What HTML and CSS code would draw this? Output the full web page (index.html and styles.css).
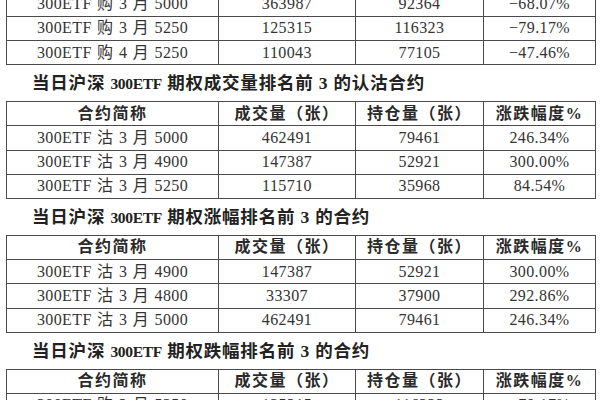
FILE: index.html
```html
<!DOCTYPE html>
<html lang="zh-CN">
<head>
<meta charset="utf-8">
<title>沪深300ETF期权排名</title>
<link rel="stylesheet" href="styles.css">
</head>
<body>
<div class="page">
  <table class="grid first">
    <colgroup><col class="c1"><col class="c2"><col class="c3"><col class="c4"></colgroup>
    <tbody>
      <tr><td>300ETF 购 3 月 5000</td><td>363987</td><td>92364</td><td>−68.07%</td></tr>
      <tr><td>300ETF 购 3 月 5250</td><td>125315</td><td>116323</td><td>−79.17%</td></tr>
      <tr><td>300ETF 购 4 月 5250</td><td>110043</td><td>77105</td><td>−47.46%</td></tr>
    </tbody>
  </table>

  <h2 class="title">当日沪深 <span class="latin">300ETF</span> 期权成交量排名前 3 的认沽合约</h2>
  <table class="grid">
    <colgroup><col class="c1"><col class="c2"><col class="c3"><col class="c4"></colgroup>
    <thead>
      <tr><th>合约简称</th><th>成交量（张）</th><th>持仓量（张）</th><th>涨跌幅度%</th></tr>
    </thead>
    <tbody>
      <tr><td>300ETF 沽 3 月 5000</td><td>462491</td><td>79461</td><td>246.34%</td></tr>
      <tr><td>300ETF 沽 3 月 4900</td><td>147387</td><td>52921</td><td>300.00%</td></tr>
      <tr><td>300ETF 沽 3 月 5250</td><td>115710</td><td>35968</td><td>84.54%</td></tr>
    </tbody>
  </table>

  <h2 class="title">当日沪深 <span class="latin">300ETF</span> 期权涨幅排名前 3 的合约</h2>
  <table class="grid">
    <colgroup><col class="c1"><col class="c2"><col class="c3"><col class="c4"></colgroup>
    <thead>
      <tr><th>合约简称</th><th>成交量（张）</th><th>持仓量（张）</th><th>涨跌幅度%</th></tr>
    </thead>
    <tbody>
      <tr><td>300ETF 沽 3 月 4900</td><td>147387</td><td>52921</td><td>300.00%</td></tr>
      <tr><td>300ETF 沽 3 月 4800</td><td>33307</td><td>37900</td><td>292.86%</td></tr>
      <tr><td>300ETF 沽 3 月 5000</td><td>462491</td><td>79461</td><td>246.34%</td></tr>
    </tbody>
  </table>

  <h2 class="title">当日沪深 <span class="latin">300ETF</span> 期权跌幅排名前 3 的合约</h2>
  <table class="grid">
    <colgroup><col class="c1"><col class="c2"><col class="c3"><col class="c4"></colgroup>
    <thead>
      <tr><th>合约简称</th><th>成交量（张）</th><th>持仓量（张）</th><th>涨跌幅度%</th></tr>
    </thead>
    <tbody>
      <tr><td>300ETF 购 3 月 5250</td><td>125315</td><td>116323</td><td>−79.17%</td></tr>
      <tr><td>300ETF 购 3 月 5000</td><td>363987</td><td>92364</td><td>−68.07%</td></tr>
    </tbody>
  </table>
</div>
</body>
</html>
```

FILE: styles.css
```css
html, body {
  margin: 0;
  padding: 0;
  background: #ffffff;
}

body {
  width: 600px;
  height: 400px;
  overflow: hidden;
  font-family: "Liberation Serif", "Noto Sans CJK SC", serif;
  color: #333333;
}

.page {
  margin-top: -8.5px;
  padding-left: 6px;
}

.grid {
  border-collapse: collapse;
  table-layout: fixed;
  width: 589px;
  font-size: 16px;
}

.c1 { width: 212px; }
.c2 { width: 137px; }
.c3 { width: 128px; }
.c4 { width: 112px; }

.grid td,
.grid th {
  border: 1px solid #4a4a4a;
  height: 23.25px;
  padding: 0;
  text-align: center;
  vertical-align: middle;
  line-height: 20px;
  white-space: nowrap;
  letter-spacing: 0.4px;
  word-spacing: 1px;
}

.grid th {
  font-weight: 700;
  color: #2a2a2a;
  letter-spacing: 1.5px;
}

.title {
  margin: 0;
  height: 35.75px;
  line-height: 36px;
  padding-left: 26px;
  font-size: 17.5px;
  font-weight: 700;
  color: #222222;
  letter-spacing: 0.8px;
  white-space: nowrap;
}

.title .latin {
  font-size: 15.5px;
  letter-spacing: -0.3px;
}
```
